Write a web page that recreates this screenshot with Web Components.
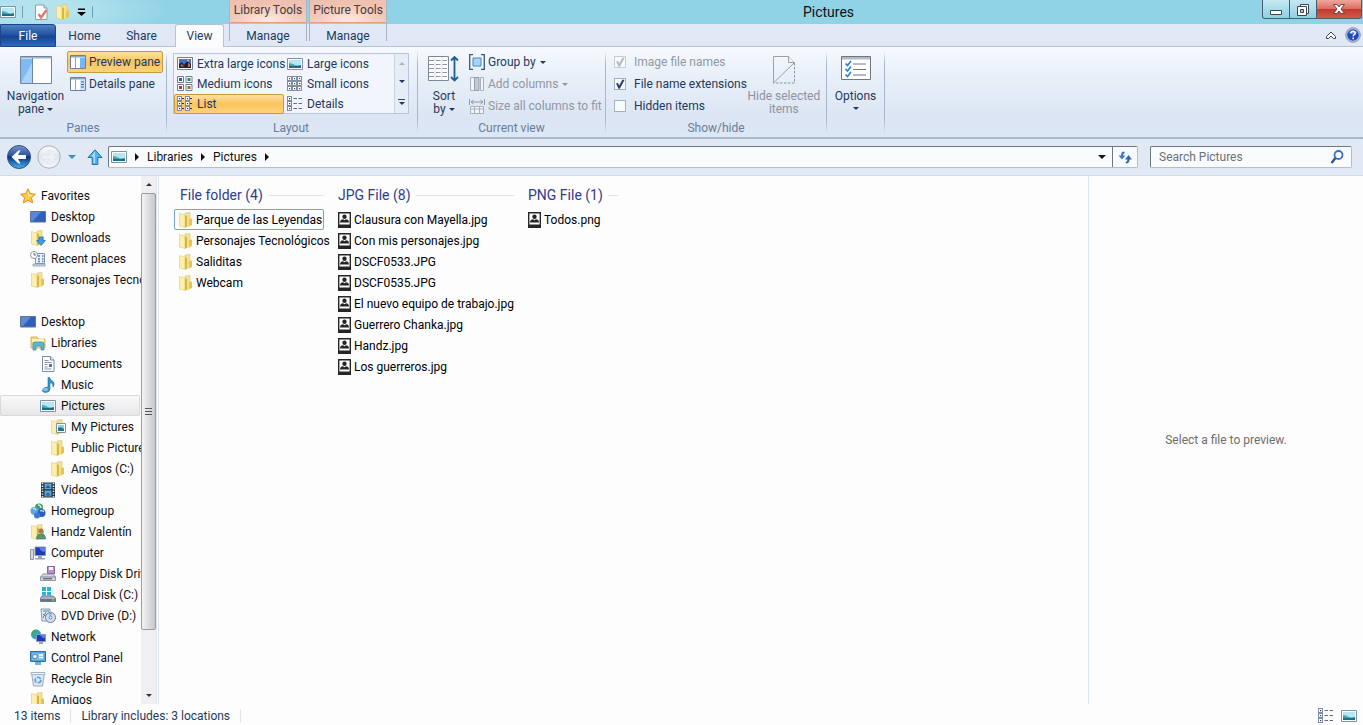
<!DOCTYPE html>
<html lang="en">
<head>
<meta charset="utf-8">
<title>Pictures</title>
<style>
html,body{margin:0;height:100%}
body{font:12px/16px Roboto,"Open Sans",sans-serif;color:#111;background:#fdfdfe}
</style>
</head>
<body>
<file-explorer></file-explorer>
<script>
const BASE = `*{box-sizing:border-box}button{font:inherit;color:inherit;background:none;border:0;padding:0;margin:0;white-space:nowrap}svg{display:block}a{color:inherit;text-decoration:none}`;
function define(name, css, html) {
  customElements.define(name, class extends HTMLElement {
    constructor() {
      super();
      this.attachShadow({ mode: 'open' });
    }
    connectedCallback() {
      const body = typeof html === 'function' ? html(this) : html;
      this.shadowRoot.innerHTML = `<style>${BASE}${css}</style>${body}`;
    }
  });
}

/* ---------- icons ---------- */
const folder = `<path d="M7 1l5-.5v13.500H7z" fill="#f6e490" stroke="#d9c266" stroke-width=".6"/><path d="M1.500 1.500L7 3v12.500l-5.500-1.500z" fill="#fbf0b0" stroke="#dcc875" stroke-width=".6"/><path d="M7 4l2-.5V15l-2 .5z" fill="#d9b640"/><path d="M9 3.500l2 1V14l-2 1z" fill="#f4e08a"/><path d="M11 7l3-.5V13l-3 1z" fill="#e3c550"/>`;
const picture = `<path d="M.5 2.500h15v11H.5z" fill="#fff" stroke="#7d94a8"/><path d="M2 4h12v8H2z" fill="#b5e6f2"/><path d="M2 7q3 0 5 1.500T14 9v3H2z" fill="#4aa9ad"/><path d="M2 9.500q6 1 12 0V12H2z" fill="#1f6a86"/>`;
const monitor = `<path d="M.5 2.500h15v10.500H.5z" fill="#2f5fb8" stroke="#5d7694"/><path d="M1 3h10L3 12H1z" fill="#5a88d8"/>`;
const gridDots = () => `<g fill="#fff" stroke="#77859a" stroke-width=".9">${[1,6,11].map(y=>[1,6,11].map(x=>`<rect x="${x-.5}" y="${y-.5}" width="4" height="4"/>`).join('')).join('')}</g><g fill="#3d4d66">${[2,7,12].map(y=>[2,7,12].map(x=>`<rect x="${x}" y="${y}" width="1.200" height="1.200"/>`).join('')).join('')}</g>`;
const cells = x => [0,5,10].map(y => `<rect x="${x+.5}" y="${y+.5}" width="4" height="4" fill="#fff" stroke="#7f8da3"/><rect x="${x+2}" y="${y+2}" width="1.200" height="1.200" fill="#2c3b55"/>`).join('');
const ICONS = {
  folder, picture, desktop: monitor,
  props: `<path d="M2.500 1h8.500l3 3v11.500H2.500z" fill="#fff" stroke="#8d9aa8"/><path d="M11 1v3h3" fill="#dde" stroke="#8d9aa8"/><path d="M5.500 10l2.500 3.500L13.500 6" fill="none" stroke="#df7866" stroke-width="2.300"/>`,
  star: `<path d="M8 .8l2.200 4.800 5.200.6-3.900 3.500 1.100 5.200L8 12.300l-4.600 2.600 1.100-5.200L.6 6.200l5.200-.6z" fill="#ffc845" stroke="#e88a2a"/><path d="M8 3l1.300 3.500 3.500.5L8 9z" fill="#ffeaa6"/>`,
  downloads: folder + `<path d="M9 7h4v3.500h2.500L11 15.500 6.500 10.500H9z" fill="#38a0e8" stroke="#1f6fb4" stroke-width=".7"/>`,
  recent: `<path d="M5.500 2.500h9v10h-9z" fill="#eef4fa" stroke="#7f93ad"/><path d="M8 5h2M12 5h1.500M8 8h2M12 8h1.500M8 10.500h2M12 10.500h1.500" stroke="#4d7fc4" stroke-width="1.500"/><path d="M3 13h12v2H3z" fill="#cdd6e2" stroke="#7f93ad" stroke-width=".7"/><circle cx="4" cy="4" r="3.500" fill="#fff" stroke="#8c98a8"/><path d="M4 2v2h2" fill="none" stroke="#567"/>`,
  libraries: `<path d="M1 2h6l1 2h7v9H1z" fill="#f5d873" stroke="#cfa643" stroke-width=".8"/><path d="M2 4h12v3H2z" fill="#fff3bd"/><path d="M3 15V9q0-2 2-2h7q2 0 2 2v6h-3v-3q0-1-1-1H7q-1 0-1 1v3z" fill="#58b4dc" stroke="#3585b4" stroke-width=".7"/>`,
  doc: `<path d="M2.500.5h8l3.500 3.500v11.500H2.500z" fill="#fff" stroke="#7f8b99"/><path d="M10.500.5V4H14" fill="#e5e9ef" stroke="#7f8b99"/><path d="M4.500 4.500h4M4.500 6.500h7M4.500 8.500h3M4.500 11h3M4.500 13h7" stroke="#8793a3"/><path d="M9 8h3v3H9z" fill="#4b7bbb"/>`,
  music: `<path d="M8 .5h1.500q1 3 4 4.500 1.500 2-.5 5 .5-4-3-4.500v6.500q0 3-4 3.500-4 0-3.500-2.500Q3.500 10 8 10z" fill="#2f97cf" stroke="#1f6f9f" stroke-width=".6"/><ellipse cx="5.500" cy="12.500" rx="2.500" ry="1.800" fill="#7cc7ec"/>`,
  mypics: folder + `<path d="M6.500 4.500h9v9h-9z" fill="#fff" stroke="#7d94a8"/><path d="M8 6h6v6H8z" fill="#8fd0e2"/><path d="M8 9q3-2 6 1v2H8z" fill="#26757f"/>`,
  videos: `<path d="M1 .5h14v15H1z" fill="#26323d"/><path d="M2.500 1v14M13.500 1v14" stroke="#e6eef4" stroke-width="1.500" stroke-dasharray="1.300 1.300"/><path d="M4.500 1.500h7v5.800h-7zM4.500 8.500h7v6h-7z" fill="#5aa6d8"/><path d="M5 6l3-3 3 3zM5 13.500l3-3 3 3z" fill="#2a5f9c"/>`,
  homegroup: `<circle cx="9" cy="4.500" r="4" fill="#3c9c60"/><circle cx="4.500" cy="8" r="4" fill="#5fa9dc"/><circle cx="11.500" cy="10" r="4" fill="#2c5bc4"/><circle cx="7" cy="12.500" r="3" fill="#3b7bd0"/><path d="M8 2q3 0 3 3M3 6q2-1 3 1M10 8q3-1 4 1" stroke="#cdeafc" fill="none" stroke-width="1.300"/>`,
  user: folder + `<circle cx="11" cy="7" r="2.500" fill="#a77b4e"/><path d="M6.500 15q0-5 4.500-5t4.500 5z" fill="#4f9c72" stroke="#336d62" stroke-width=".6"/>`,
  computer: `<path d="M.5 4.500h3v10h-3z" fill="#d5dae0" stroke="#8b94a0"/><path d="M5 2h10.500v8.500H5z" fill="#1f39b8" stroke="#8b9bb0"/><path d="M9 2.500h6v4q-4 1-6-4z" fill="#5d7fe6"/><path d="M8 11h4v2H8zM5 13h10v1.500H5z" fill="#9aa6b5"/>`,
  floppy: `<path d="M7.500.5h7v7h-7z" fill="#b98fce" stroke="#8a5fa4"/><path d="M9 1h4v3H9z" fill="#fff"/><path d="M3 8h10l2.500 3v3.500H.5V11z" fill="#d3d8de" stroke="#7c8591" stroke-width=".8"/><path d="M.5 11h15" stroke="#7c8591"/><path d="M3 12.800h9" stroke="#444"/>`,
  disk: `<g fill="#25b4dc"><path d="M2 0h4v4H2zM7 0h4v4H7zM2 5h4v3.500H2zM7 5h4v3.500H7z"/></g><path d="M2 9h11l2.500 2v3.500H.5V11z" fill="#a8b2bd" stroke="#5f6b78" stroke-width=".8"/><path d="M.8 12h14.400v2.500H.8z" fill="#687584"/><path d="M12 13h2" stroke="#6f6"/>`,
  dvd: `<path d="M1 1h9v12H2z" fill="#dfeaf5" stroke="#5f87b0" stroke-width=".8"/><path d="M3 3h6M3 6l4 3M3 10l3-6" stroke="#5a8a7c"/><circle cx="10.500" cy="9.500" r="5" fill="#d3def0" stroke="#6b7fa0"/><path d="M10.500 9.500L8 5.500a5 5 0 0 1 4-.6z" fill="#86b5e8"/><circle cx="10.500" cy="9.500" r="1.400" fill="#fff" stroke="#6b7fa0"/>`,
  network: `<circle cx="6" cy="5.500" r="5" fill="#3aa0c8"/><path d="M2 3q3-3 6-2-1 3-3 3t-1 3q-2 0-2-4z" fill="#3fae5b"/><path d="M6.500 5.500h9v7h-9z" fill="#1f39b8" stroke="#8b9bb0"/><path d="M10 6h5v3q-3 1-5-3z" fill="#5d7fe6"/><path d="M9 13h4v2H9z" fill="#9aa6b5"/>`,
  control: `<path d="M.5 1.500h15v10H.5z" fill="#55a5d8" stroke="#2f6f9f"/><path d="M2 3h12v7H2z" fill="#79bce4"/><circle cx="5" cy="6.500" r="2.300" fill="#e8f5fc" stroke="#3f87c4"/><path d="M9 5h4M9 7.500h4" stroke="#fff" stroke-width="1.300"/><path d="M5 12h6v3H5z" fill="#74b2d9"/>`,
  recycle: `<path d="M1.500 1.500l2 13.500h9l2-13.500z" fill="#dce9f5" stroke="#94aac2"/><path d="M1 1.500h14v2H1z" fill="#f4f9fd" stroke="#94aac2" stroke-width=".8"/><circle cx="8" cy="9" r="2.800" fill="none" stroke="#5f97dc" stroke-width="1.600" stroke-dasharray="4.500 1.400"/>`,
  photo: `<path d="M.7.700h11.600v14.600H.7z" fill="#fff" stroke="#262626" stroke-width="1.400"/><circle cx="6.500" cy="4.700" r="2.200" fill="#262626"/><path d="M2 10.500q0-3 3-3.200l1.500 1 1.500-1q3 .2 3 3.200z" fill="#262626"/><path d="M0 12.500h13V16H0z" fill="#262626"/>`,
  xlarge: `<path d="M.5 1.500h15v12H.5z" fill="#fff" stroke="#6d7e94"/><path d="M2 3h12v9H2z" fill="#3a78cc"/><path d="M2 12V8l3-2 2 3 3-4 4 3v4z" fill="#14243c"/><path d="M3 10l2-2 2 3zM11 7l2 1v3h-2z" fill="#e0662c"/><circle cx="11" cy="4.500" r="1" fill="#f6c04c"/>`,
  medium: `<g fill="#fff" stroke="#6d7e94"><path d="M.5.500h6v6h-6zM9 .5h6v6H9zM.5 8.500h6v6h-6zM9 8.500h6v6H9z"/></g><path d="M2 2h3v3H2z" fill="#2b62b8"/><path d="M10.500 2h3v3h-3z" fill="#398b62"/><path d="M2 10h3v3H2z" fill="#c0352c"/><path d="M10.500 10h3v3h-3z" fill="#a56b2a"/>`,
  small: gridDots(),
  list: cells(0) + cells(8) + `<path d="M5 2.500h2M5 7.500h2M5 12.500h2M13 2.500h2M13 7.500h2M13 12.500h2" stroke="#2c3b55"/>`,
  details: cells(0) + `<path d="M6.500 2.500H10M11.500 2.500H15M6.500 7.500H10M11.500 7.500H15M6.500 12.500H10M11.500 12.500H15" stroke="#5d6c82"/>`,
  preview: `<path d="M.5 1.500h15v13H.5z" fill="#fff" stroke="#6d8099"/><path d="M1 2h14v1.500H1z" fill="#8fa5bf"/><path d="M5.500 3v11" stroke="#8fa5bf"/><path d="M10 4h5v10h-5z" fill="#7db5f0"/>`,
  detailsPane: `<path d="M.5 1.500h15v13H.5z" fill="#fff" stroke="#6d8099"/><path d="M1 2h14v1.500H1z" fill="#8fa5bf"/><path d="M5.500 3v11" stroke="#8fa5bf"/><path d="M10 4h5v10h-5z" fill="#cfe3fa"/><path d="M11 6h3M11 8.500h3M11 11h3" stroke="#2b5ea8"/>`,
  groupby: `<path d="M4 .7H.7v14.600H4M12 .7h3.300v14.600H12" fill="none" stroke="#35587f" stroke-width="1.300"/><path d="M4 4h8v8H4z" fill="#a9d4fa" stroke="#4b84c2"/>`,
  addcols: `<path d="M1.500 1.500h4v13h-4zM11.500 1.500h3v13h-3z" fill="#f4f5f8" stroke="#a8b0bc"/><path d="M5.500 1.500h4.500v13H5.500z" fill="#c4c9d2" stroke="#98a0ad"/>`,
  sizecols: `<path d="M.5 1v6M15.500 1v6M2 4h12M4.500 2L2 4l2.500 2M11.500 2L14 4l-2.500 2" fill="none" stroke="#8f97a5"/><path d="M1.500 8.500h13v7h-13zM1.500 11h13M5.500 8.500v7M10.500 8.500v7" fill="#f4f5f8" stroke="#a8b0bc"/>`,
  help: `<circle cx="8" cy="8" r="7.300" fill="#b9c3d6" stroke="#7a88a4" stroke-width=".8"/><circle cx="8" cy="8" r="5.800" fill="#2349c0"/><path d="M3.500 6a5 5 0 0 1 9 0q-4 2-9 0z" fill="#5f86e6"/><path d="M6 6.300q.2-2 2.200-2 2 .2 2 1.900 0 1.100-1.200 1.700-.8.400-.8 1.400M8.200 10.600v1.600" fill="none" stroke="#fff" stroke-width="1.500"/>`,
  refresh: `<path d="M7 2.500q-3 0-3 4H1.500L5 10.500l3.500-4H6q0-2 2-2.500z" fill="#3f78c4"/><path d="M9 14.500q3.500 0 3.500-4H15L11.500 6 8 10.500h2.500q0 2-2 2.500z" fill="#3565ac"/>`,
  search: `<circle cx="9.500" cy="6" r="4" fill="#fff" stroke="#3b6fc4" stroke-width="1.800"/><path d="M6.500 9L2.500 14" stroke="#33508a" stroke-width="2.300"/>`,
  back: `<defs><linearGradient id="b" x2="0" y2="1"><stop stop-color="#7796cf"/><stop offset=".45" stop-color="#27509c"/><stop offset=".5" stop-color="#0d2f7c"/><stop offset="1" stop-color="#3fb8f4"/></linearGradient></defs><circle cx="12" cy="12" r="11.500" fill="url(#b)" stroke="#344f80"/><path d="M4.500 12L11.500 5.500h2L11 10h8v4h-8l2.500 4.500h-2z" fill="#fff"/>`,
  forward: `<defs><linearGradient id="f" x2="0" y2="1"><stop stop-color="#fbfcfe"/><stop offset=".5" stop-color="#dfe6ef"/><stop offset="1" stop-color="#f5f8fb"/></linearGradient></defs><circle cx="12" cy="12" r="11.200" fill="url(#f)" stroke="#a6afbb"/><path d="M19.500 12L12.500 5.500h-2L13 10H5v4h8l-2.500 4.500h2z" fill="#eef1f5" stroke="#dde3ea" stroke-width=".6"/>`,
  up: `<path d="M8 .8l7 7.700h-4.200v7H5.200v-7H1z" fill="#4fb6f0" stroke="#226ea8"/><path d="M8 2.500L4 7.500h2.500V14h1.500z" fill="#a4dcfa"/>`,
  min: `<path d="M2.500 9.500h11v4h-11z" fill="#fff" stroke="#3b4652"/>`,
  restore: `<path d="M5.500 3.500h8v9h-8z" fill="#fff" stroke="#3b4652"/><path d="M2.500 5.500h9v9h-9z" fill="#fff" stroke="#3b4652"/><path d="M5.500 8.500h3v3h-3z" fill="#8fd3e6" stroke="#3b4652"/>`,
  close: `<path d="M2.500 3.500h3.500l2 2.500 2-2.500h3.500L10 8l3.500 4.500H10l-2-2.500-2 2.500H2.500L6 8z" fill="#fff" stroke="#5c3b3c" stroke-width=".9"/>`,
  collapse: `<path d="M3.500 9.500L8 5l4.500 4.500v2h-2L8 9l-2.500 2.500h-2z" fill="#fff" stroke="#3b4652"/>`,
  navpane: `<path d="M.5.500h31v27H.5z" fill="#fff" stroke="#70849c"/><path d="M1 1h30v1.500H1z" fill="#9fb2c8"/><path d="M1 3h11.500v24H1z" fill="#7fbaf2"/><path d="M1 27L12.500 6v21z" fill="#a9d2fa"/><path d="M12.500 2v25" stroke="#70849c"/>`,
  sort: `<path d="M.5.500h20v24H.5z" fill="#fff" stroke="#7f8792"/><path d="M1 4.500h19M1 8.500h19M1 12.500h19M1 16.500h19M1 20.500h19" stroke="#8c96a5" stroke-dasharray="5 1.500"/><path d="M7 1v23M14 1v23" stroke="#dde2ea"/><path d="M26.500 1v23M23 4.500L26.500 1 30 4.500M23 21l3.500 3.500L30 21" fill="none" stroke="#1f5f8f" stroke-width="1.800"/>`,
  hide: `<path d="M1.500 27V.5h15l6 6" fill="none" stroke="#9aa1ab"/><path d="M16.500.5v6h6" fill="#eef1f6" stroke="#9aa1ab"/><path d="M22.500 7v20H1.500" fill="none" stroke="#8b93a0" stroke-dasharray="2.500 1.500"/><path d="M1.500 27L22 7" stroke="#9aa1ab"/>`,
  options: `<path d="M.5.500h29v23H.5z" fill="#fff" stroke="#6f7680"/><path d="M1 1h28v2.500H1z" fill="#b4bac3"/><path d="M12 8h13M12 13.500h13M12 19h13" stroke="#6f7680"/><path d="M4.500 7.500l2 2L10 5M4.500 13l2 2 3.500-4.500M4.500 18.500l2 2L10 16" fill="none" stroke="#2a87c8" stroke-width="1.700"/>`
};
const SIZES = { photo: [13, 16], back: [24, 24], forward: [24, 24], navpane: [32, 28], sort: [32, 26], hide: [24, 28], options: [30, 24] };
define('ui-icon', `:host{display:block;flex:none}`, el => {
  const n = el.getAttribute('name'), [w, h] = SIZES[n] || [16, 16];
  return `<svg width="${w}" height="${h}" viewBox="0 0 ${w} ${h}" aria-hidden="true">${ICONS[n]}</svg>`;
});

/* small solid triangle used by menus and scroll buttons */
define('ui-caret', `:host{display:inline-block;border:3px solid transparent;border-top-color:currentColor;border-bottom:0;vertical-align:middle}
:host([dir=up]){border:3px solid transparent;border-bottom-color:currentColor;border-top:0}
:host([dir=right]){border:4px solid transparent;border-left-color:currentColor;border-right:0}
:host([size=large]){border-width:4px 4px 0}`, ``);

/* ---------- title bar and tabs ---------- */
define('context-tab', `:host{display:flex;flex-direction:column;width:78px;height:41px;border:solid #a9b6c6;border-width:0 1px;color:#1e395b}
.top{height:23px;line-height:20px;text-align:center;background:radial-gradient(ellipse at 50% 110%,#fff0e0,transparent 60%),linear-gradient(#eebfae,#f5cdb9);color:#4a3a44;white-space:nowrap;border-bottom:1px solid #e0a083}
button{height:18px;line-height:26px}`,
  el => `<div class="top">${el.getAttribute('group')}</div><button role="tab"><slot></slot></button>`);

define('window-header', `:host{display:flex;height:47px;background:linear-gradient(#90d3e6 24px,#dfe8f4 24px);border-bottom:1px solid #b4c4d8;gap:2px}
.left{width:227px;background:radial-gradient(ellipse 130px 30px at 40px 10px,#b4e3ee 30%,transparent) 0 0/100% 24px no-repeat}
.qat{height:24px;display:flex;align-items:center;gap:6px}
.qat i{width:1px;height:12px;background:#6f9fb0}
.qat button{display:flex}.qat .first{margin-left:4px}
.tabs{display:flex;height:23px;color:#1e395b}
.tabs button{line-height:24px;width:57px;text-align:center}
.tabs .file{width:56px;color:#fff;background:linear-gradient(#4e80c2,#1d4f9f 50%,#16428f 51%,#2a6ac0);border:1px solid #1b4588;border-radius:0 3px 0 0;line-height:20px}
.tabs .on{width:49px;margin-left:5px;background:#fbfcfe;border:1px solid #b4c4d8;border-bottom:0;border-radius:3px 3px 0 0;line-height:22px}
.right{flex:1;min-width:0}
.title{display:flex;height:24px;align-items:flex-start}
h1{flex:1;margin:0;padding-left:6px;font-size:14px;font-weight:400;line-height:24px;text-align:center;color:#111}
.win{display:flex;margin-right:1px;height:19px;border:1px solid #46606e;border-top:0;border-radius:0 0 3px 3px;overflow:hidden;background:linear-gradient(#c4e8f2,#8fd0e2)}
.win button{width:27px;display:flex;align-items:center;justify-content:center;border-right:1px solid #46606e}
.win .close{width:44px;border:0;background:linear-gradient(#f0a79c,#dd6a5c 50%,#c03a30 51%,#d4584a)}
.tools{display:flex;justify-content:flex-end;align-items:center;gap:6px;height:22px;padding-right:2px}
.tools button{display:flex}`,
`<div class="left"><div class="qat"><ui-icon name="picture"></ui-icon><i></i>
<button class="first" aria-label="Properties"><ui-icon name="props"></ui-icon></button><button aria-label="New folder"><ui-icon name="folder"></ui-icon></button>
<button aria-label="Customize toolbar"><svg width="9" height="8"><path d="M1 .5h7v1.500H1zM0 4h9L4.500 8z"/></svg></button><i></i></div>
<div class="tabs" role="tablist"><button class="file" role="tab">File</button><button role="tab">Home</button><button role="tab">Share</button><button class="on" role="tab" aria-selected="true">View</button></div></div>
<context-tab group="Library Tools">Manage</context-tab><context-tab group="Picture Tools">Manage</context-tab>
<div class="right"><div class="title"><h1>Pictures</h1><div class="win"><button aria-label="Minimize"><ui-icon name="min"></ui-icon></button><button aria-label="Restore"><ui-icon name="restore"></ui-icon></button><button class="close" aria-label="Close"><ui-icon name="close"></ui-icon></button></div></div>
<div class="tools"><button aria-label="Minimize the ribbon"><ui-icon name="collapse"></ui-icon></button><button aria-label="Help"><ui-icon name="help"></ui-icon></button></div></div>`);

/* ---------- ribbon ---------- */
define('ribbon-group', `:host{display:flex;flex-direction:column;height:90px;padding:4px 8px 0;border-right:1px solid;border-image:linear-gradient(transparent 5%,#a5b6cd 20%,#a5b6cd 80%,transparent 95%) 1}
.body{display:flex;height:69px}.label{text-align:center;color:#6a7c9c;line-height:17px}`,
  el => `<div class="body"><slot></slot></div><div class="label">${el.getAttribute('label') || ''}</div>`);
define('ribbon-big', `:host{display:block;flex:none}button{display:flex;flex-direction:column;align-items:center;width:100%;line-height:13px;padding-top:5px}
.pic{height:34px}button:disabled{color:#8d939e}`,
  el => `<button ${el.hasAttribute('disabled') ? 'disabled' : ''}><span class="pic"><ui-icon name="${el.getAttribute('icon')}"></ui-icon></span><slot></slot></button>`);
define('ribbon-small', `:host{display:block}button{display:flex;align-items:center;height:22px;width:100%;gap:3px;padding:0 2px;border:1px solid transparent;border-radius:2px}
:host([pressed]) button{background:linear-gradient(#fde0a0,#fbc45e 50%,#fdd27c);border-color:#c69a3e}button:disabled{color:#9197a3}`,
  el => `<button ${el.hasAttribute('disabled') ? 'disabled' : ''} ${el.hasAttribute('pressed') ? 'aria-pressed="true"' : ''}><ui-icon name="${el.getAttribute('icon')}"></ui-icon><slot></slot></button>`);
define('ribbon-check', `:host{display:block}label{display:flex;align-items:center;height:22px;gap:8px;white-space:nowrap}
input{appearance:none;margin:0;width:12px;height:12px;border:1px solid #a3b1c4;background:#f8fafd;display:grid}
input:checked::after{content:"";background:#27406e;clip-path:polygon(10% 45%,30% 40%,42% 65%,75% 5%,95% 10%,48% 98%,35% 98%)}
input:disabled{border-color:#c5ccd6}input:disabled::after{background:#b4bac4}
:host([disabled]) label{color:#9197a3}`,
  el => `<label><input type="checkbox" ${el.hasAttribute('checked') ? 'checked' : ''} ${el.hasAttribute('disabled') ? 'disabled' : ''}><slot></slot></label>`);
define('layout-gallery', `:host{display:flex;height:61px;margin-top:2px;border:1px solid #b7c6da;background:#f2f6fc}
.grid{display:grid;grid-template-columns:110px 110px;grid-auto-rows:20px;flex:1;margin-bottom:-1px}
.grid button{display:flex;align-items:center;gap:4px;padding:0 2px;border:1px solid transparent}
.grid .on{background:linear-gradient(#fde0a0,#fbc45e 50%,#fdd27c);border-color:#c69a3e;border-radius:2px}
.side{display:grid;width:14px;border-left:1px solid #c9d5e5;background:#e6edf7}.side button{display:flex;flex-direction:column;align-items:center;justify-content:center;gap:2px}
.side button:disabled{color:#a9b4c4}
.side button:last-child::before{content:"";width:7px;height:1px;background:#33475f}`,
`<div class="grid"><button><ui-icon name="xlarge"></ui-icon>Extra large icons</button><button><ui-icon name="picture"></ui-icon>Large icons</button>
<button><ui-icon name="medium"></ui-icon>Medium icons</button><button><ui-icon name="small"></ui-icon>Small icons</button>
<button class="on" aria-pressed="true"><ui-icon name="list"></ui-icon>List</button><button><ui-icon name="details"></ui-icon>Details</button></div>
<div class="side"><button disabled aria-label="Up"><ui-caret dir="up"></ui-caret></button><button aria-label="Down"><ui-caret></ui-caret></button><button aria-label="More"><ui-caret></ui-caret></button></div>`);
define('view-ribbon', `:host{display:flex;height:92px;background:linear-gradient(#f7faff,#e9f0f9 30%,#dbe5f3 80%,#dde7f5);border-bottom:2px solid #a9b9cd;color:#1e395b}
.panes{width:167px;padding-left:4px;padding-right:4px}.layout{width:251px;padding-left:6px}.view{width:188px}.show{width:221px}.opts{width:58px;padding-left:0;padding-right:0}
.panes ribbon-big{width:63px}.stack{flex:1}.view ribbon-big{width:36px;margin-right:4px}.show ribbon-big{width:74px;margin-left:auto;margin-right:-2px}.opts ribbon-big{width:57px}
.lone{margin-top:4px}ribbon-small ui-caret{margin-left:1px}`,
`<ribbon-group class="panes" label="Panes"><ribbon-big icon="navpane"><span>Navigation</span><span>pane <ui-caret></ui-caret></span></ribbon-big><div class="stack"><ribbon-small pressed icon="preview">Preview pane</ribbon-small><ribbon-small icon="detailsPane">Details pane</ribbon-small></div></ribbon-group>
<ribbon-group class="layout" label="Layout"><layout-gallery></layout-gallery></ribbon-group>
<ribbon-group class="view" label="Current view"><ribbon-big icon="sort"><span>Sort</span><span>by <ui-caret></ui-caret></span></ribbon-big><div class="stack"><ribbon-small icon="groupby">Group by <ui-caret></ui-caret></ribbon-small><ribbon-small disabled icon="addcols">Add columns <ui-caret></ui-caret></ribbon-small><ribbon-small disabled icon="sizecols">Size all columns to fit</ribbon-small></div></ribbon-group>
<ribbon-group class="show" label="Show/hide"><div><ribbon-check checked disabled>Image file names</ribbon-check><ribbon-check checked>File name extensions</ribbon-check><ribbon-check>Hidden items</ribbon-check></div><ribbon-big disabled icon="hide"><span>Hide selected</span><span>items</span></ribbon-big></ribbon-group>
<ribbon-group class="opts"><ribbon-big icon="options"><span>Options</span><ui-caret class="lone"></ui-caret></ribbon-big></ribbon-group>`);

/* ---------- address bar ---------- */
define('address-bar', `:host{display:flex;align-items:center;height:37px;padding:0 11px 0 7px;background:#e0e9f4;border-bottom:1px solid #cfdae8}
button{display:flex;align-items:center;justify-content:center}
.fwd{margin-left:6px}.hist{width:21px;color:#3f8dba}.up{margin:0 5px}
.path{flex:1;display:flex;align-items:center;height:22px;border:1px solid #6d7780;border-right-color:#b5bfca;border-bottom-color:#b5bfca;border-radius:2px;background:#f9fbfd;padding-left:2px}
.path ui-caret[dir=right]{margin:0 8px}
.drop{margin-left:auto;width:20px;height:20px;color:#112}.ref{width:25px;height:20px;border-left:1px solid #6d7780}
.find{display:flex;align-items:center;width:202px;height:22px;margin-left:12px;border:1px solid #6d7780;border-right-color:#b5bfca;border-bottom-color:#b5bfca;border-radius:2px;background:#f9fbfd;padding:0 6px 0 8px}
input{flex:1;min-width:0;border:0;background:none;font:inherit;padding:0;outline:0}input::placeholder{color:#6b7178;opacity:1}`,
`<button aria-label="Back"><ui-icon name="back"></ui-icon></button><button class="fwd" aria-label="Forward" disabled><ui-icon name="forward"></ui-icon></button><button class="hist" aria-label="Recent locations"><ui-caret size="large"></ui-caret></button><button class="up" aria-label="Up"><ui-icon name="up"></ui-icon></button>
<nav class="path" aria-label="Address"><ui-icon name="picture"></ui-icon><ui-caret dir="right"></ui-caret><a href="#libraries">Libraries</a><ui-caret dir="right"></ui-caret><a href="#pictures">Pictures</a><ui-caret dir="right"></ui-caret><button class="drop" aria-label="Previous locations"><ui-caret size="large"></ui-caret></button><button class="ref" aria-label="Refresh"><ui-icon name="refresh"></ui-icon></button></nav>
<label class="find"><input type="text" placeholder="Search Pictures" aria-label="Search Pictures"><ui-icon name="search"></ui-icon></label>`);

/* ---------- navigation tree ---------- */
define('tree-item', `:host{display:block;height:21px;padding-left:20px}
:host([level="1"]){padding-left:30px}:host([level="2"]){padding-left:40px}:host([level="3"]){padding-left:50px}
:host([selected]){background:linear-gradient(#fafafa,#e6e6e8);box-shadow:inset 0 0 0 1px #d9d9dc;border-radius:2px}
:host([clipped]) span{height:8px;line-height:8px;overflow:hidden}
a{display:flex;align-items:center;gap:5px;height:21px;white-space:nowrap}`,
  el => `<a href="#"><ui-icon name="${el.getAttribute('icon')}"></ui-icon><span><slot></slot></span></a>`);
define('pane-scrollbar', `:host{display:flex;flex-direction:column;width:16px;background:#f0f0f2;border-right:1px solid #e2e4e8}
button{height:17px;display:flex;align-items:center;justify-content:center;color:#333}
.track{flex:1;display:flex;flex-direction:column}.thumb{flex:0 0 88.500%;display:grid;place-content:center;gap:2px;border:1px solid #9a9ca2;border-radius:2px;background:linear-gradient(90deg,#f4f4f5,#dedfe2 45%,#c6c8cd)}
.thumb i{width:7px;height:1px;background:#555}`,
`<button aria-label="Scroll up"><ui-caret dir="up"></ui-caret></button><div class="track"><div class="thumb"><i></i><i></i><i></i></div></div><button aria-label="Scroll down"><ui-caret></ui-caret></button>`);
const TREE = [
  [0,'star','Favorites'],[1,'desktop','Desktop'],[1,'downloads','Downloads'],[1,'recent','Recent places'],[1,'folder','Personajes Tecnológicos'],null,
  [0,'desktop','Desktop'],[1,'libraries','Libraries'],[2,'doc','Documents','clipped'],[2,'music','Music'],[2,'picture','Pictures','selected'],
  [3,'mypics','My Pictures'],[3,'folder','Public Pictures'],[3,'folder','Amigos (C:)'],[2,'videos','Videos'],[1,'homegroup','Homegroup'],[1,'user','Handz Valentín'],
  [1,'computer','Computer'],[2,'floppy','Floppy Disk Drive'],[2,'disk','Local Disk (C:)'],[2,'dvd','DVD Drive (D:)'],[1,'network','Network'],[1,'control','Control Panel'],[1,'recycle','Recycle Bin'],[1,'folder','Amigos']
];
define('nav-tree', `:host{display:flex;width:159px;border-right:1px solid #dbe6f2}
nav{flex:1;min-width:0;overflow:hidden;padding:9px 1px 0 0;height:0;min-height:100%}.gap{height:21px}pane-scrollbar{margin-right:1px}`,
  () => `<nav aria-label="Folders">${TREE.map(t => t ? `<tree-item level="${t[0]}" icon="${t[1]}" ${t[3] || ''}>${t[2]}</tree-item>` : `<div class="gap"></div>`).join('')}</nav><pane-scrollbar></pane-scrollbar>`);

/* ---------- file list ---------- */
define('file-item', `:host{display:block}a{display:flex;align-items:center;gap:3px;height:21px;padding:0 0 0 6px;white-space:nowrap;color:#000}
:host([icon=folder]) a{gap:2px;padding:0 0 0 4px}
:host([focused]) a{box-shadow:inset 0 0 0 1px #7da2ce;border-radius:2px;margin-right:2px}`,
  el => `<a href="#"><ui-icon name="${el.getAttribute('icon') || 'photo'}"></ui-icon><slot></slot></a>`);
define('file-group', `:host{display:block;min-width:0}h2{display:flex;align-items:center;gap:5px;margin:0 0 4px;padding:0 2px 0 6px;font-weight:400;font-size:14px;line-height:20px;color:#2f3c8c;white-space:nowrap}
h2::after{content:"";flex:1;height:1px;background:#dfe3ea}`,
  el => `<h2>${el.getAttribute('heading')}</h2><slot></slot>`);
define('file-list', `:host{display:grid;grid-template-columns:152px 184px 98px;gap:6px;align-content:start;padding:9px 15px}`,
`<file-group heading="File folder (4)"><file-item icon="folder" focused>Parque de las Leyendas</file-item><file-item icon="folder">Personajes Tecnológicos</file-item><file-item icon="folder">Saliditas</file-item><file-item icon="folder">Webcam</file-item></file-group>
<file-group heading="JPG File (8)">${['Clausura con Mayella.jpg','Con mis personajes.jpg','DSCF0533.JPG','DSCF0535.JPG','El nuevo equipo de trabajo.jpg','Guerrero Chanka.jpg','Handz.jpg','Los guerreros.jpg'].map(f => `<file-item>${f}</file-item>`).join('')}</file-group>
<file-group heading="PNG File (1)"><file-item>Todos.png</file-item></file-group>`);
define('preview-pane', `:host{display:grid;place-content:center;width:275px;border-left:1px solid #dbe6f2;color:#6d6d6d}`, `<slot></slot>`);
define('status-bar', `:host{display:flex;align-items:center;height:21px;padding:2px 6px 0 14px;gap:10px;color:#1e395b}
i{width:1px;height:14px;background:#dde4ec}.modes{margin-left:auto;display:flex;gap:7px}.modes button{display:flex}`,
`<span>13 items</span><i></i><span>Library includes: 3 locations</span><i></i><div class="modes"><button aria-label="Details view"><ui-icon name="details"></ui-icon></button><button aria-label="Thumbnail view"><ui-icon name="picture"></ui-icon></button></div>`);

define('file-explorer', `:host{display:flex;flex-direction:column;min-height:100vh}main{flex:1;display:flex}file-list{flex:1}`,
`<window-header></window-header><view-ribbon></view-ribbon><address-bar></address-bar><main><nav-tree></nav-tree><file-list></file-list><preview-pane>Select a file to preview.</preview-pane></main><status-bar></status-bar>`);
</script>
</body>
</html>
